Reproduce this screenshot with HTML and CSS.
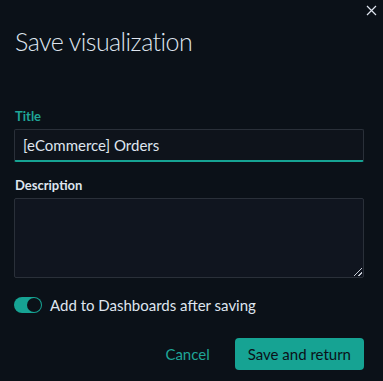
FILE: index.html
```html
<!DOCTYPE html>
<html lang="en">
<head>
<title>Save visualization</title>
<meta charset="utf-8">
<link rel="stylesheet" href="styles.css">
</head>
<body>
	<div class="modal">
		<button class="close" title="Close">
			<svg width="11" height="11" viewBox="0 0 11 11"><path d="M1 1 L10 10 M10 1 L1 10" stroke="#dfe5ef" stroke-width="1.2" fill="none"/></svg>
		</button>
		<h1 class="modal_title">Save visualization</h1>

		<div class="field">
			<label class="label label_active">Title</label>
			<div class="input">[eCommerce] Orders</div>
		</div>

		<div class="field">
			<label class="label">Description</label>
			<div class="textarea"><span class="grip"></span></div>
		</div>

		<div class="switch_row">
			<span class="switch"><span class="knob"></span></span>
			<span class="switch_label">Add to Dashboards after saving</span>
		</div>

		<div class="footer">
			<button class="btn_empty">Cancel</button>
			<button class="btn_fill">Save and return</button>
		</div>
	</div>
</body>
</html>
```

FILE: styles.css
```css
body{
	margin: 0;
	background-color: #0b1118;
	font-family: Lato, "Noto Sans", sans-serif;
	color: #dfe5ef;
}
.modal{
	position: relative;
	width: 383px;
	height: 381px;
	padding: 0 19px 0 14px;
	box-sizing: border-box;
}
.close{
	position: absolute;
	top: 5px;
	right: 6px;
	background: none;
	border: 0;
	padding: 0;
	line-height: 0;
}
.modal_title{
	margin: 0;
	padding: 25px 0 0 1px;
	font-size: 25px;
	font-weight: 300;
	line-height: 32px;
	letter-spacing: -0.55px;
	color: #dfe5ef;
}
.field{ margin-top: 14px; }
.field:first-of-type{ margin-top: 50px; }
.label{
	display: block;
	padding-left: 1px;
	font-size: 13px;
	font-weight: 700;
	line-height: 18px;
	color: #dfe5ef;
	margin-bottom: 4px;
}
.label_active{ color: #1fa597; }
.input{
	height: 30px;
	line-height: 30px;
	padding: 0 8px;
	background-color: #0e131b;
	border: 1px solid #2a3039;
	border-bottom: 2px solid #16a393;
	border-radius: 2px;
	font-size: 15px;
	color: #dfe5ef;
}
.textarea{
	position: relative;
	height: 78px;
	background-color: #10151f;
	border: 1px solid #2a3039;
	border-radius: 2px;
}
.grip{
	position: absolute;
	right: 1px;
	bottom: 1px;
	width: 8px;
	height: 8px;
	background: linear-gradient(135deg, transparent 45%, #c5cbd4 45%, #c5cbd4 55%, transparent 55%, transparent 75%, #c5cbd4 75%, #c5cbd4 85%, transparent 85%);
}
.switch_row{
	display: flex;
	align-items: center;
	gap: 8px;
	margin-top: 18px;
}
.switch{
	position: relative;
	width: 28px;
	height: 16px;
	border-radius: 8px;
	background-color: #16a393;
}
.knob{
	position: absolute;
	right: 1px;
	top: 1px;
	width: 14px;
	height: 14px;
	border-radius: 50%;
	background-color: #0b1118;
}
.switch_label{
	font-size: 15px;
	color: #dfe5ef;
}
.footer{
	display: flex;
	justify-content: flex-end;
	align-items: center;
	gap: 25px;
	margin-top: 24px;
}
.btn_empty{
	background: none;
	border: 0;
	font-family: inherit;
	font-size: 15px;
	color: #1fa597;
	padding: 0;
}
.btn_fill{
	height: 32px;
	padding: 0 13px;
	background-color: #16a393;
	border: 0;
	border-radius: 4px;
	font-family: inherit;
	font-size: 15px;
	color: #0b1118;
}
```
